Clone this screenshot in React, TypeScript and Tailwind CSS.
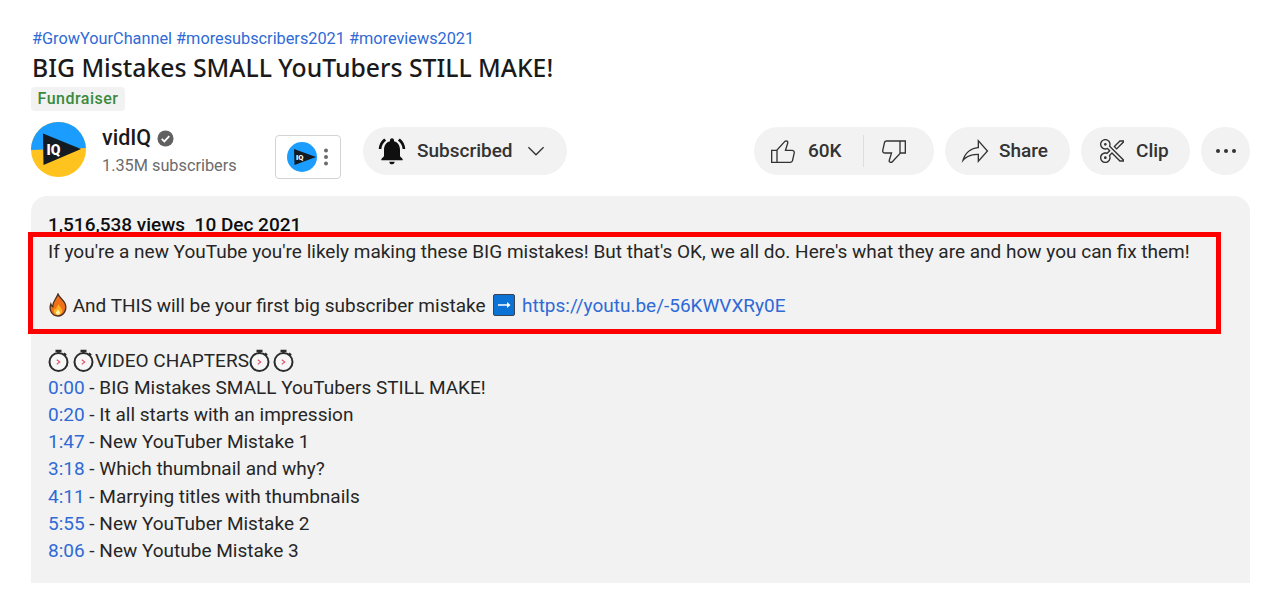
const ROBOTO = "font-['Roboto',sans-serif]";

function Icon({ d, className }: { d: string; className?: string }) {
  return (
    <svg viewBox="0 0 24 24" fill="currentColor" className={className} aria-hidden>
      <path d={d} />
    </svg>
  );
}

const LIKE =
  "M18.77,11h-4.23l1.52-4.94C16.38,5.03,15.54,4,14.38,4c-0.58,0-1.14,0.24-1.52,0.65L7,11H3v10h4h1h9.43c1.06,0,1.98-0.67,2.19-1.61l1.34-6C21.23,12.15,20.18,11,18.77,11z M7,20H4v-8h3V20z M19.98,13.17l-1.34,6C18.54,19.65,18.03,20,17.43,20H8v-8.61l5.6-6.06C13.79,5.12,14.08,5,14.38,5c0.26,0,0.5,0.11,0.63,0.3c0.07,0.1,0.15,0.26,0.09,0.47l-1.52,4.94L13.18,12h1.35h4.23c0.41,0,0.8,0.17,1.03,0.46C19.92,12.61,20.05,12.86,19.98,13.17z";
const DISLIKE =
  "M17,4h-1H6.57C5.5,4,4.59,4.67,4.38,5.61l-1.34,6C2.77,12.85,3.82,14,5.23,14h4.23l-1.52,4.94C7.62,19.97,8.46,21,9.62,21c0.58,0,1.14-0.24,1.52-0.65L17,14h4V4H17z M10.4,19.67C10.21,19.88,9.92,20,9.62,20c-0.26,0-0.5-0.11-0.63-0.3c-0.07-0.1-0.15-0.26-0.09-0.47l1.52-4.94l0.4-1.29H9.46H5.23c-0.41,0-0.8-0.17-1.03-0.46c-0.12-0.15-0.25-0.4-0.18-0.72l1.34-6C5.46,5.35,5.97,5,6.57,5H16v8.61L10.4,19.67z M20,13h-3V5h3V13z";
const SHARE =
  "M15 5.63 20.66 12 15 18.37V14h-1c-3.96 0-7.14 1-9.75 3.09 1.84-4.07 5.11-6.4 9.89-7.1l.86-.13V5.63M14 3v6C6.22 10.13 3.11 15.33 2 21c2.78-3.97 6.44-6 12-6v6l8-9-8-9z";
const CLIP =
  "M8 7c0 .55-.45 1-1 1s-1-.45-1-1 .45-1 1-1 1 .45 1 1zm-1 9c-.55 0-1 .45-1 1s.45 1 1 1 1-.45 1-1-.45-1-1-1zm3.79-7.77L21 18.44V20h-3.27l-5.76-5.76-1.27 1.27c.19.46.3.96.3 1.49 0 2.21-1.79 4-4 4s-4-1.79-4-4 1.79-4 4-4c.42 0 .81.08 1.19.2l1.37-1.37-1.11-1.11C8 10.89 7.51 11 7 11c-2.21 0-4-1.79-4-4s1.79-4 4-4 4 1.79 4 4c0 .43-.09.84-.21 1.23zm-.71.71-.43-.44.19-.58c.11-.34.16-.64.16-.92 0-1.65-1.35-3-3-3S4 5.35 4 7s1.35 3 3 3c.36 0 .73-.07 1.09-.21l.61-.24.46.46 1.11 1.11.71.71-.71.71-1.37 1.37-.43.43-.58-.18C7.55 14.05 7.27 14 7 14c-1.65 0-3 1.35-3 3s1.35 3 3 3 3-1.35 3-3c0-.38-.07-.75-.22-1.12l-.25-.61.47-.47 1.27-1.27.71-.71.71.71L18.15 19H20v-.15l-9.92-9.91zM17.73 4H21v1.56l-5.52 5.52-2.41-2.41L17.73 4zm.42 1-3.67 3.67 1 1L20 5.15V5h-1.85z";
const BELL =
  "M7.58 4.08 6.15 2.65C3.75 4.48 2.17 7.3 2.03 10.5h2c.15-2.65 1.51-4.97 3.55-6.42zm12.39 6.42h2c-.15-3.2-1.73-6.02-4.12-7.85l-1.42 1.43c2.02 1.45 3.39 3.77 3.54 6.42zM18 11c0-3.07-1.64-5.64-4.5-6.32V4c0-.83-.67-1.5-1.5-1.5s-1.5.67-1.5 1.5v.68C7.63 5.36 6 7.92 6 11v5l-2 2v1h16v-1l-2-2v-5zm-6 11c.14 0 .27-.01.4-.04.65-.14 1.18-.58 1.44-1.18.1-.24.15-.5.15-.78h-4c.01 1.1.9 2 2.01 2z";

function Avatar() {
  return (
    <svg viewBox="0 0 55 55" className="h-[55px] w-[55px] shrink-0" aria-hidden>
      <defs>
        <clipPath id="avatar-clip">
          <circle cx="27.5" cy="27.5" r="27.5" />
        </clipPath>
      </defs>
      <g clipPath="url(#avatar-clip)">
        <rect width="55" height="55" fill="#ffc31f" />
        <path d="M0 0h55v26L0 28z" fill="#1a9dff" />
      </g>
      <path d="M12 11.5 50 27 12.5 43z" fill="#131a22" />
      <text x="15.5" y="33" fontSize="14" fontWeight="900" fill="#fff" fontFamily="Roboto, sans-serif">
        IQ
      </text>
    </svg>
  );
}

function MiniLogo() {
  return (
    <svg viewBox="0 0 30 30" className="h-[30px] w-[30px]" aria-hidden>
      <circle cx="15" cy="15" r="15" fill="#1a9dff" />
      <path d="M7 7 29 15 7.5 23z" fill="#131a22" />
      <text x="9" y="18" fontSize="7.5" fontWeight="900" fill="#fff" fontFamily="Roboto, sans-serif">
        IQ
      </text>
    </svg>
  );
}

function Flame() {
  return (
    <svg viewBox="0 0 20 24" className="inline-block h-[24px] w-[20px] align-[-5px]" aria-hidden>
      <path d="M10 1c.8 3 5 5.500 7 9.500 2.300 5-.5 12.500-7.200 12.500C3.500 23 .8 16.500 2.800 11c.4 1.200 1 2.200 2 2.700C4.300 9 8.200 6 10 1z" fill="#f0701a" stroke="#4a3020" strokeWidth="1.300" />
      <path d="M10.500 11c.4 2 3.800 4 3.800 7 0 2.300-2 4-4.300 4s-4.300-1.700-4.300-4c0-1.300.8-2.400 1.400-3 .2 1 .6 1.300 1 1.500-.2-2 1.800-3.500 2.400-5.500z" fill="#ffb020" />
      <path d="M10 16.500c.6 1 2 2 2 3.300 0 1.100-.9 1.900-2 1.900s-2-.8-2-1.900c0-1.300 1.400-2.200 2-3.300z" fill="#fff3b0" />
    </svg>
  );
}

function ArrowBox() {
  return (
    <svg viewBox="0 0 22 22" className="ml-[3px] mr-[2px] inline-block h-[22px] w-[22px] align-[-4px]" aria-hidden>
      <rect x=".5" y=".5" width="21" height="21" rx="1.500" fill="#0b72d6" stroke="#3a4450" />
      <path d="M5 10.300h9V8l3.500 3-3.500 3v-2.300H5z" fill="#fff" />
    </svg>
  );
}

function Stopwatch() {
  return (
    <svg viewBox="0 0 21 23" className="inline-block h-[23px] w-[21px] align-[-5px]" aria-hidden>
      <circle cx="10.500" cy="13" r="9" fill="#f7f7f7" stroke="#2b2b2b" strokeWidth="2" />
      <path d="M7.500 .8h6v2.200h-2v2h-2V3h-2zM16.500 3.500l2.300 1.900-1.300 1.600-2.300-1.900z" fill="#2b2b2b" />
      <path d="m8.800 10.700 3 2.300-3 2.300" fill="none" stroke="#e0566a" strokeWidth="1.100" />
    </svg>
  );
}

function Pill({ children, className }: { children: React.ReactNode; className?: string }) {
  return (
    <div className={`flex h-[48px] items-center rounded-full bg-[#f2f2f2] text-[#333333] ${className ?? ""}`}>
      {children}
    </div>
  );
}

const chapters = [
  ["0:00", "BIG Mistakes SMALL YouTubers STILL MAKE!"],
  ["0:20", "It all starts with an impression"],
  ["1:47", "New YouTuber Mistake 1"],
  ["3:18", "Which thumbnail and why?"],
  ["4:11", "Marrying titles with thumbnails"],
  ["5:55", "New YouTuber Mistake 2"],
  ["8:06", "New Youtube Mistake 3"],
];

export default function App() {
  return (
    <div className={`relative h-[604px] w-[1280px] overflow-hidden bg-white pl-[31px] pr-[30px] pt-[29px] text-[#0f0f0f] ${ROBOTO}`}>
      <div className="pl-[1px] text-[16.300px] leading-[20px] text-[#2f6ad6]">
        <a>#GrowYourChannel</a> <a>#moresubscribers2021</a> <a>#moreviews2021</a>
      </div>
      <h1 className="mt-[3px] pl-[1px] font-['Noto_Sans',sans-serif] text-[24.750px] font-medium leading-[32px] text-[#1a1a1a]">
        BIG Mistakes SMALL YouTubers STILL MAKE!
      </h1>
      <div className="mt-[3px] flex">
        <span className="flex h-[24px] w-[94px] items-center justify-center rounded-[4px] bg-[#f2f2f2] text-[16px] font-medium tracking-[0.5px] text-[#3a8a3e]">
          Fundraiser
        </span>
      </div>

      <div className="mt-[11px] flex h-[55px] items-start">
        <Avatar />
        <div className="ml-[16px] w-[173px]">
          <div className="mt-[2px] flex items-center gap-[6px] text-[21.500px] font-medium leading-[28px] text-[#1a1a1a]">
            vidIQ
            <svg viewBox="0 0 18 18" className="h-[17px] w-[17px]" aria-hidden>
              <circle cx="9" cy="9" r="8.500" fill="#606060" />
              <path d="m5 9.300 2.800 2.800L13 6.500" fill="none" stroke="#fff" strokeWidth="1.800" />
            </svg>
          </div>
          <div className="mt-[3px] text-[16.300px] leading-[22px] text-[#6b6b6b]">1.35M subscribers</div>
        </div>
        <div className="mt-[13px] flex h-[44px] w-[66px] items-center rounded-[4px] border border-[#d3d3d3] pl-[11px]">
          <MiniLogo />
          <svg viewBox="0 0 6 20" className="ml-[6px] h-[20px] w-[6px] text-[#6b6b6b]" fill="currentColor" aria-hidden>
            <circle cx="3" cy="3.500" r="2" />
            <circle cx="3" cy="10" r="2" />
            <circle cx="3" cy="16.500" r="2" />
          </svg>
        </div>
        <Pill className="ml-[22px] mt-[5px] w-[204px] pl-[13px]">
          <Icon d={BELL} className="h-[32px] w-[32px] text-[#0f0f0f]" />
          <span className="ml-[9px] text-[19px] font-medium">Subscribed</span>
          <svg viewBox="0 0 24 24" className="ml-[10px] h-[26px] w-[26px]" fill="none" stroke="currentColor" strokeWidth="1.200" aria-hidden>
            <path d="m5 8.500 7 7 7-7" />
          </svg>
        </Pill>

        <div className="ml-auto mt-[5px] flex gap-[11px]">
          <Pill className="w-[180px] pl-[13px]">
            <Icon d={LIKE} className="h-[32px] w-[32px]" />
            <span className="ml-[9px] w-[36px] text-[19px] font-medium">60K</span>
            <span className="ml-[19px] h-[32px] w-px bg-[#dedede]" />
            <Icon d={DISLIKE} className="ml-[14px] h-[32px] w-[32px]" />
          </Pill>
          <Pill className="w-[125px] pl-[14px]">
            <Icon d={SHARE} className="h-[32px] w-[32px]" />
            <span className="ml-[8px] text-[19px] font-medium">Share</span>
          </Pill>
          <Pill className="w-[109px] pl-[15px]">
            <Icon d={CLIP} className="h-[32px] w-[32px]" />
            <span className="ml-[8px] text-[19px] font-medium">Clip</span>
          </Pill>
          <Pill className="w-[49px] justify-center">
            <svg viewBox="0 0 24 6" className="h-[6px] w-[24px]" fill="currentColor" aria-hidden>
              <circle cx="4" cy="3" r="2" />
              <circle cx="12" cy="3" r="2" />
              <circle cx="20" cy="3" r="2" />
            </svg>
          </Pill>
        </div>
      </div>

      <div className="mt-[19px] h-[387px] rounded-t-[16px] bg-[#f2f2f2] px-[17px] pt-[15px] text-[19px] leading-[27.150px] text-[#262626]">
        <div className="font-medium text-[#0f0f0f]">1,516,538 views&nbsp;&nbsp;10 Dec 2021</div>
        <div>If you're a new YouTube you're likely making these BIG mistakes! But that's OK, we all do. Here's what they are and how you can fix them!</div>
        <div className="h-[27.150px]" />
        <div>
          <Flame /> And THIS will be your first big subscriber mistake <ArrowBox />{" "}
          <a className="text-[#2f6ad6]">https://youtu.be/-56KWVXRy0E</a>
        </div>
        <div className="h-[27.150px]" />
        <div className="flex h-[27.150px] items-center">
          <span className="flex gap-[4px]">
            <Stopwatch />
            <Stopwatch />
          </span>
          <span className="ml-[1px]">VIDEO CHAPTERS</span>
          <span className="flex gap-[3px]">
            <Stopwatch />
            <Stopwatch />
          </span>
        </div>
        {chapters.map(([time, label]) => (
          <div key={time}>
            <a className="text-[#2f6ad6]">{time}</a> - {label}
          </div>
        ))}
      </div>

      {/* annotation drawn over the description */}
      <div className="absolute left-[28px] top-[232px] h-[102px] w-[1193px] border-[5px] border-[#ff0000]" />
    </div>
  );
}
